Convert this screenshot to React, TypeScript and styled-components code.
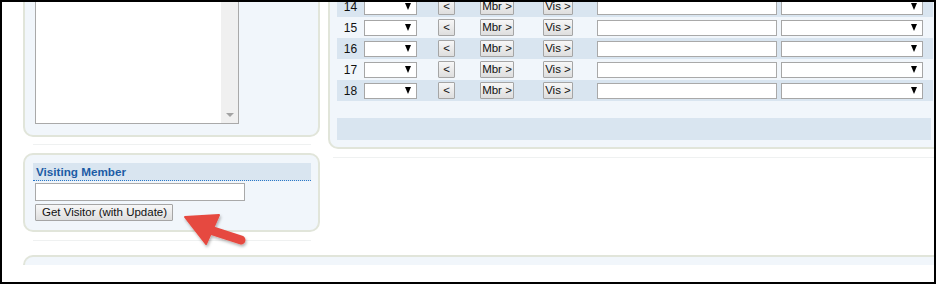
import styled, { createGlobalStyle } from "styled-components";

const GlobalStyle = createGlobalStyle`
    html, body {
        margin: 0;
        padding: 0;
        background: #ffffff;
    }
`

const Frame = styled.div`
    position: relative;
    width: 936px;
    height: 284px;
    box-sizing: border-box;
    border: 2px solid #000000;
    background: #ffffff;
    overflow: hidden;
    font-family: Arial, "Liberation Sans", sans-serif;
    color: #111111;
`

// the page is scrolled a little, row 14 is cut by the top edge
const Page = styled.div`
    margin-top: -22px;
    padding-left: 21px;
`

const TopSection = styled.div`
    display: flex;
    align-items: flex-start;
    gap: 8px;
`

const Column = styled.div<{ $width?: number }>`
    display: flex;
    flex-direction: column;
    flex: none;
    width: ${props => props.$width ? `${props.$width}px` : 'auto'};
`

const Panel = styled.div`
    box-sizing: border-box;
    border: 2px solid #e1e5da;
    border-radius: 10px;
    background-color: #f1f6fb;
`

const ListPanel = styled(Panel)`
    padding: 10px 79px 11px 10px;
`

const ListBox = styled.div`
    box-sizing: border-box;
    width: 204px;
    height: 132px;
    border: 1px solid #a9a9a9;
    background: #ffffff;
    display: flex;
    justify-content: flex-end;
`

const ScrollTrack = styled.div`
    width: 17px;
    background: #f0f0f0;
    display: flex;
    flex-direction: column;
    justify-content: flex-end;
    align-items: center;
    padding-bottom: 6px;
    box-sizing: border-box;
`

const ScrollArrow = styled.span`
    width: 0;
    height: 0;
    border-left: 4px solid transparent;
    border-right: 4px solid transparent;
    border-top: 4px solid #a3a3a3;
`

const Separator = styled.div<{ $inset: string }>`
    height: 1px;
    background: #eff1f1;
    margin: ${props => props.$inset};
`

const VisitorPanel = styled(Panel)`
    padding: 8px 7px 9px 8px;
`

const SectionHeader = styled.h4`
    margin: 0;
    height: 17px;
    line-height: 18px;
    padding-left: 3px;
    background: #d9e5f0;
    border-bottom: 1px dotted #2a78c8;
    color: #1c5ca5;
    font-size: 11.7px;
    font-weight: bold;
`

const VisitorForm = styled.div`
    display: flex;
    flex-direction: column;
    align-items: flex-start;
    gap: 3px;
    padding: 2px 0 0 2px;
`

const TextBox = styled.input<{ $width: number; $height: number }>`
    box-sizing: border-box;
    width: ${props => props.$width}px;
    height: ${props => props.$height}px;
    margin: 0;
    padding: 0 2px;
    border: 1px solid #a9a9a9;
    background: #ffffff;
    font: 12px Arial, "Liberation Sans", sans-serif;
`

const PushButton = styled.button<{ $width?: number; $height: number }>`
    box-sizing: border-box;
    width: ${props => props.$width ? `${props.$width}px` : 'auto'};
    height: ${props => props.$height}px;
    margin: 0;
    padding: 0 6px;
    border: 1px solid #a5a5a5;
    border-radius: 1px;
    background: linear-gradient(#f7f7f7, #dedede);
    color: #111111;
    font: 11.5px Arial, "Liberation Sans", sans-serif;
    line-height: 1;
    white-space: nowrap;
    cursor: pointer;
`

const RowButton = styled(PushButton)`
    padding: 0;
    text-align: center;
`

const RightPanel = styled(Panel)`
    width: 620px;
    padding: 14px 15px 7px 7px;
    border-right: none;
    border-radius: 0 0 0 10px;
`

const Row = styled.div<{ $shaded: boolean }>`
    display: grid;
    grid-template-columns: 27px 74px 42px 63px 54px 184px 150px;
    align-items: center;
    height: 21px;
    background: ${props => props.$shaded ? '#d9e5f0' : '#f1f6fb'};
`

const RowNumber = styled.span`
    text-align: center;
    font-size: 12px;
    color: #111111;
`

const FakeSelect = styled.div<{ $width: number }>`
    box-sizing: border-box;
    width: ${props => props.$width}px;
    height: 16px;
    border: 1px solid #a6a6a6;
    background: #ffffff;
    display: flex;
    align-items: center;
    justify-content: flex-end;
    padding-right: 5px;
`

const SelectArrow = styled.span`
    width: 0;
    height: 0;
    border-left: 3px solid transparent;
    border-right: 3px solid transparent;
    border-top: 7px solid #000000;
`

const FooterBar = styled.div`
    margin-top: 17px;
    width: 594px;
    height: 22px;
    background: #d9e5f0;
`

const BottomPanel = styled(Panel)`
    margin-top: 14px;
    width: 1000px;
    height: 10px;
    border-bottom: none;
    border-right: none;
    border-radius: 10px 0 0 0;
`

const Callout = styled.svg`
    position: absolute;
    left: 168px;
    top: 203px;
    width: 90px;
    height: 50px;
    overflow: visible;
`

function SeatRow({ number }: { number: number }) {
    return (
        <Row $shaded={number % 2 === 0}>
            <RowNumber>{number}</RowNumber>
            <FakeSelect $width={53}><SelectArrow /></FakeSelect>
            <RowButton $width={17} $height={17}>&lt;</RowButton>
            <RowButton $width={34} $height={17}>Mbr &gt;</RowButton>
            <RowButton $width={30} $height={17}>Vis &gt;</RowButton>
            <TextBox $width={180} $height={16} />
            <FakeSelect $width={142}><SelectArrow /></FakeSelect>
        </Row>
    )
}

export default function App() {
    const rows = [14, 15, 16, 17, 18]

    return (
        <Frame>
            <GlobalStyle />
            <Page>
                <TopSection>
                    <Column $width={297}>
                        <ListPanel>
                            <ListBox>
                                <ScrollTrack><ScrollArrow /></ScrollTrack>
                            </ListBox>
                        </ListPanel>
                        <Separator $inset="7px 9px 8px 10px" />
                        <VisitorPanel>
                            <SectionHeader>Visiting Member</SectionHeader>
                            <VisitorForm>
                                <TextBox $width={210} $height={18} />
                                <PushButton $width={138} $height={17}>Get Visitor (with Update)</PushButton>
                            </VisitorForm>
                        </VisitorPanel>
                        <Separator $inset="8px 9px 0 10px" />
                    </Column>
                    <Column>
                        <RightPanel>
                            {rows.map(n => <SeatRow key={n} number={n} />)}
                            <FooterBar />
                        </RightPanel>
                        <Separator $inset="8px 0 0 5px" />
                    </Column>
                </TopSection>
                <BottomPanel />
            </Page>

            <Callout viewBox="170 205 90 50">
                <defs>
                    <filter id="arrowShadow" x="-20%" y="-20%" width="150%" height="160%">
                        <feDropShadow dx="1" dy="2" stdDeviation="1.5" floodColor="#000000" floodOpacity="0.3" />
                    </filter>
                </defs>
                <g filter="url(#arrowShadow)" fill="#e64a40" stroke="#e64a40">
                    <line x1="207" y1="229" x2="241" y2="240" strokeWidth="9" strokeLinecap="round" />
                    <polygon points="185,217 219,215 206,244" strokeWidth="2" strokeLinejoin="round" />
                </g>
            </Callout>
        </Frame>
    )
}
